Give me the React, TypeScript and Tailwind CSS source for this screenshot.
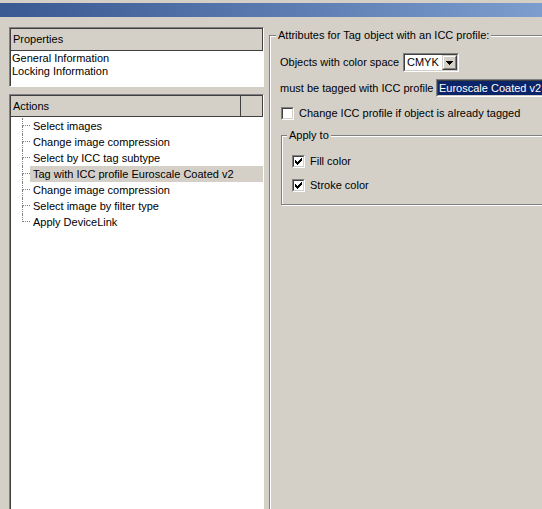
import React from "react";

const sunken =
  "border border-t-[#808080] border-l-[#808080] border-r-white border-b-white";
const sunkenInner =
  "border border-t-[#404040] border-l-[#404040] border-r-[#d4d0c8] border-b-[#d4d0c8]";

const actions = [
  "Select images",
  "Change image compression",
  "Select by ICC tag subtype",
  "Tag with ICC profile Euroscale Coated v2",
  "Change image compression",
  "Select image by filter type",
  "Apply DeviceLink",
];

const CheckBox = ({ checked }: { checked?: boolean }) => (
  <span className={`flex h-[13px] w-[13px] shrink-0 ${sunken}`}>
    <span className={`flex flex-1 items-center justify-center bg-white ${sunkenInner}`}>
      {checked && (
        <svg width="7" height="7" viewBox="0 0 7 7" shapeRendering="crispEdges">
          <path
            fill="#000"
            d="M6 0h1v1h-1z M5 1h2v1h-2z M0 2h1v1h-1z M4 2h3v1h-3z M0 3h2v1h-2z M3 3h3v1h-3z M0 4h5v1h-5z M1 5h3v1h-3z M2 6h1v1h-1z"
          />
        </svg>
      )}
    </span>
  </span>
);

const HeaderCell = ({ children, className = "" }: { children?: React.ReactNode; className?: string }) => (
  <div className={`flex items-center border-r border-b border-[#404040] bg-[#d4d0c8] pl-[2px] ${className}`}>
    {children}
  </div>
);

const App = () => {
  return (
    <div className="flex h-[509px] w-[542px] flex-col overflow-hidden bg-[#d4d0c8] font-['Liberation_Sans',Arial,sans-serif] text-[11px] leading-[13px] text-black">
      <div className="h-[3px] shrink-0 bg-[#d4d0c8]" />
      <div className="h-[14px] shrink-0 bg-gradient-to-r from-[#3a5892] to-[#7c9dcd]" />

      <div className="flex min-h-0 flex-1">
        {/* left side */}
        <div className="flex w-[264px] shrink-0 flex-col gap-[7px] pt-[10px] pl-[9px]">
          <div className={`h-[60px] shrink-0 ${sunken}`}>
            <div className={`flex h-full flex-col bg-white ${sunkenInner} border-b-0 border-r-0`}>
              <HeaderCell className="h-[22px] shrink-0">Properties</HeaderCell>
              <div className="pt-[1px] pl-[1px]">
                <div>General Information</div>
                <div>Locking Information</div>
              </div>
            </div>
          </div>

          <div className={`h-[500px] shrink-0 ${sunken}`}>
            <div className={`flex h-full flex-col bg-white ${sunkenInner} border-b-0 border-r-0`}>
              <div className="flex h-[21px] shrink-0">
                <HeaderCell className="flex-1">Actions</HeaderCell>
                <HeaderCell className="w-[22px]" />
              </div>
              <div className="flex flex-col pt-[1px] pl-[11px]">
                {actions.map((a, i) => {
                  const last = i === actions.length - 1;
                  const selected = i === 3;
                  return (
                    <div key={i} className="flex h-[16px]">
                      <div className="flex w-[8px] shrink-0 flex-col">
                        <div className="h-[8px] border-b border-l border-dotted border-[#808080]" />
                        {!last && <div className="h-[8px] border-l border-dotted border-[#808080]" />}
                      </div>
                      <div className={`flex flex-1 items-center pl-[3px] ${selected ? "bg-[#d4d0c8]" : ""}`}>
                        {a}
                      </div>
                    </div>
                  );
                })}
              </div>
            </div>
          </div>
        </div>

        {/* splitter */}
        <div className="w-[5px] shrink-0 bg-[#d4d0c8]" />

        {/* right side */}
        <div className="flex w-[300px] shrink-0 flex-col pt-[12px]">
          <fieldset className="h-[500px] shrink-0 border border-[#808080] px-[10px] pt-[11px] shadow-[inset_1px_1px_0_#fff,1px_1px_0_#fff]">
            <legend className="-ml-[4px] bg-[#d4d0c8] px-[2px]">Attributes for Tag object with an ICC profile:</legend>

            <div className="flex h-[19px] items-center">
              <span className="w-[123px] shrink-0">Objects with color space</span>
              <div className={`flex h-[19px] w-[56px] shrink-0 ${sunken}`}>
                <div className={`flex flex-1 items-center bg-white ${sunkenInner}`}>
                  <span className="flex-1 pl-[2px]">CMYK</span>
                  <div className="flex h-full w-[15px] border border-t-[#d4d0c8] border-l-[#d4d0c8] border-r-[#404040] border-b-[#404040]">
                    <div className="flex flex-1 items-center justify-center border border-t-white border-l-white border-r-[#808080] border-b-[#808080] bg-[#d4d0c8]">
                      <svg width="7" height="4" viewBox="0 0 7 4" shapeRendering="crispEdges">
                        <path fill="#000" d="M0 0h7v1h-7z M1 1h5v1h-5z M2 2h3v1h-3z M3 3h1v1h-1z" />
                      </svg>
                    </div>
                  </div>
                </div>
              </div>
            </div>

            <div className="mt-[7px] flex h-[18px] items-center">
              <span className="w-[156px] shrink-0">must be tagged with ICC profile</span>
              <div className={`flex h-[18px] w-[130px] shrink-0 ${sunken}`}>
                <div className={`flex flex-1 items-center bg-[#0a246a] pl-[1px] text-white ${sunkenInner}`}>
                  Euroscale Coated v2
                </div>
              </div>
            </div>

            <div className="mt-[10px] ml-[1px] flex h-[13px] items-center gap-[5px]">
              <CheckBox />
              <span>Change ICC profile if object is already tagged</span>
            </div>

            <fieldset className="mt-[9px] ml-[1px] border border-[#808080] pt-[13px] pr-[10px] pb-[12px] pl-[10px] shadow-[inset_1px_1px_0_#fff,1px_1px_0_#fff]">
              <legend className="-ml-[5px] bg-[#d4d0c8] px-[2px]">Apply to</legend>
              <div className="flex flex-col gap-[11px]">
                <div className="flex h-[13px] items-center gap-[5px]">
                  <CheckBox checked />
                  <span>Fill color</span>
                </div>
                <div className="flex h-[13px] items-center gap-[5px]">
                  <CheckBox checked />
                  <span>Stroke color</span>
                </div>
              </div>
            </fieldset>
          </fieldset>
        </div>
      </div>
    </div>
  );
};

export default App;
